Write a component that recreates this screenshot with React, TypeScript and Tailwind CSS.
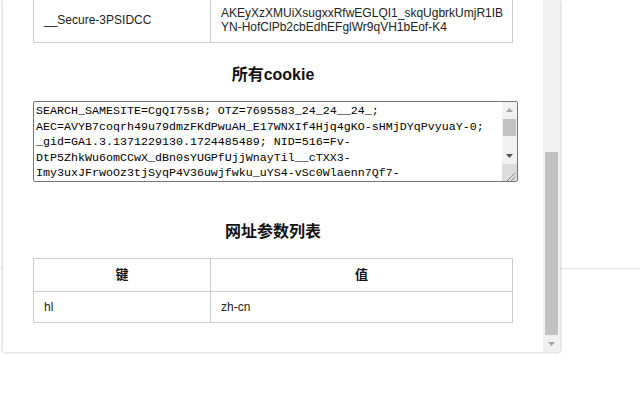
const SANS = "font-['Liberation_Sans','Noto_Sans_CJK_SC',sans-serif]";

const COOKIES =
  "SEARCH_SAMESITE=CgQI75sB; OTZ=7695583_24_24__24_; AEC=AVYB7coqrh49u79dmzFKdPwuAH_E17WNXIf4Hjq4gKO-sHMjDYqPvyuaY-0; _gid=GA1.3.1371229130.1724485489; NID=516=Fv-DtP5ZhkWu6omCCwX_dBn0sYUGPfUjjWnayTil__cTXX3-Imy3uxJFrwoOz3tjSyqP4V36uwjfwku_uYS4-vSc0Wlaenn7Qf7-sYCAOTp0WqHRzR7nUuPPv2GsW3aL8nVdKQ; _ga=GA1.1.1784629813.1724485489; SID=g.a000nAjq3kVbR0cT1xZyHq8uW2pL5mN9sD4fG7hJ0kL3zX6cV9bN2mQ8wE1rT4yU7iO0pA3sD6fG9hJ2k; HSID=AqW9eR2tY5uI8oP1a; SSID=AsD4fG7hJ0kL3zX6c";

const PARAMS = [{ key: "hl", value: "zh-cn" }];

function Tri({ down, color }: { down?: boolean; color: string }) {
  return (
    <svg width="7" height="4" viewBox="0 0 7 4">
      <path d={down ? "M0 0h7L3.5 4z" : "M0 4h7L3.5 0z"} fill={color} />
    </svg>
  );
}

export default function App() {
  return (
    <div className={`relative w-[640px] h-[400px] bg-white overflow-hidden ${SANS}`}>
      {/* page behind the popup */}
      <div className="h-[269px] border-b border-[#e3e3e3]" />

      <div className="absolute left-[3px] top-0 w-[557px] h-[352px] bg-white flex shadow-[0_0_3px_rgba(0,0,0,0.3)]">
        <div className="flex-1 overflow-hidden px-[30px] flex flex-col">
          <table className="w-[480px] -mt-[3px] table-fixed border-collapse text-[12px] text-[#222] shrink-0">
            <tbody>
              <tr className="h-[45px]">
                <td className="w-[177px] border border-[#ccc] px-[10px]">__Secure-3PSIDCC</td>
                <td className="border border-[#ccc] px-[10px] leading-[14px] whitespace-nowrap overflow-hidden">
                  AKEyXzXMUiXsugxxRfwEGLQI1_skqUgbrkUmjR1IB
                  <br />
                  YN-HofClPb2cbEdhEFglWr9qVH1bEof-K4
                </td>
              </tr>
            </tbody>
          </table>

          <h3 className="mt-[20px] text-center text-[16px] leading-[24px] font-bold text-[#111]">所有cookie</h3>

          <div className="mt-[14px] shrink-0 w-[485px] h-[81px] border border-[#767676] rounded-[2px] flex overflow-hidden">
            <textarea
              readOnly
              defaultValue={COOKIES}
              className="flex-1 h-full p-[2px] resize-none overflow-hidden font-['Liberation_Mono',monospace] text-[11.67px] leading-[15.5px] text-black outline-none"
            />
            <div className="w-[15px] bg-[#f1f1f1] flex flex-col">
              <div className="h-[16px] flex items-center justify-center">
                <Tri color="#a3a3a3" />
              </div>
              <div className="mt-[1px] mx-[1px] h-[17px] bg-[#c1c1c1]" />
              <div className="flex-1" />
              <div className="h-[16px] flex items-center justify-center">
                <Tri down color="#505050" />
              </div>
              <div className="h-[17px] bg-[#dcdcdc] flex items-end justify-end">
                <svg width="15" height="17" viewBox="0 0 15 17">
                  <path d="M13 9L5 17M13 13L9 17" stroke="#8a8a8a" strokeWidth="1" />
                </svg>
              </div>
            </div>
          </div>

          <h3 className="mt-[38px] text-center text-[16px] leading-[24px] font-bold text-[#111]">网址参数列表</h3>

          <table className="mt-[14px] w-[480px] table-fixed border-collapse text-[12px] text-[#222] shrink-0">
            <thead>
              <tr className="h-[33px]">
                <th className="w-[177px] border border-[#ccc] text-[13px] font-bold text-[#111]">键</th>
                <th className="border border-[#ccc] text-[13px] font-bold text-[#111]">值</th>
              </tr>
            </thead>
            <tbody>
              {PARAMS.map((p) => (
                <tr key={p.key} className="h-[31px]">
                  <td className="border border-[#ccc] px-[10px]">{p.key}</td>
                  <td className="border border-[#ccc] px-[10px]">{p.value}</td>
                </tr>
              ))}
            </tbody>
          </table>
        </div>

        {/* popup scrollbar, scrolled to the bottom */}
        <div className="w-[17px] bg-[#f1f1f1] flex flex-col">
          <div className="flex-1" />
          <div className="mx-[2px] h-[183px] bg-[#c1c1c1]" />
          <div className="h-[17px] flex items-center justify-center">
            <Tri down color="#a3a3a3" />
          </div>
        </div>
      </div>
    </div>
  );
}
